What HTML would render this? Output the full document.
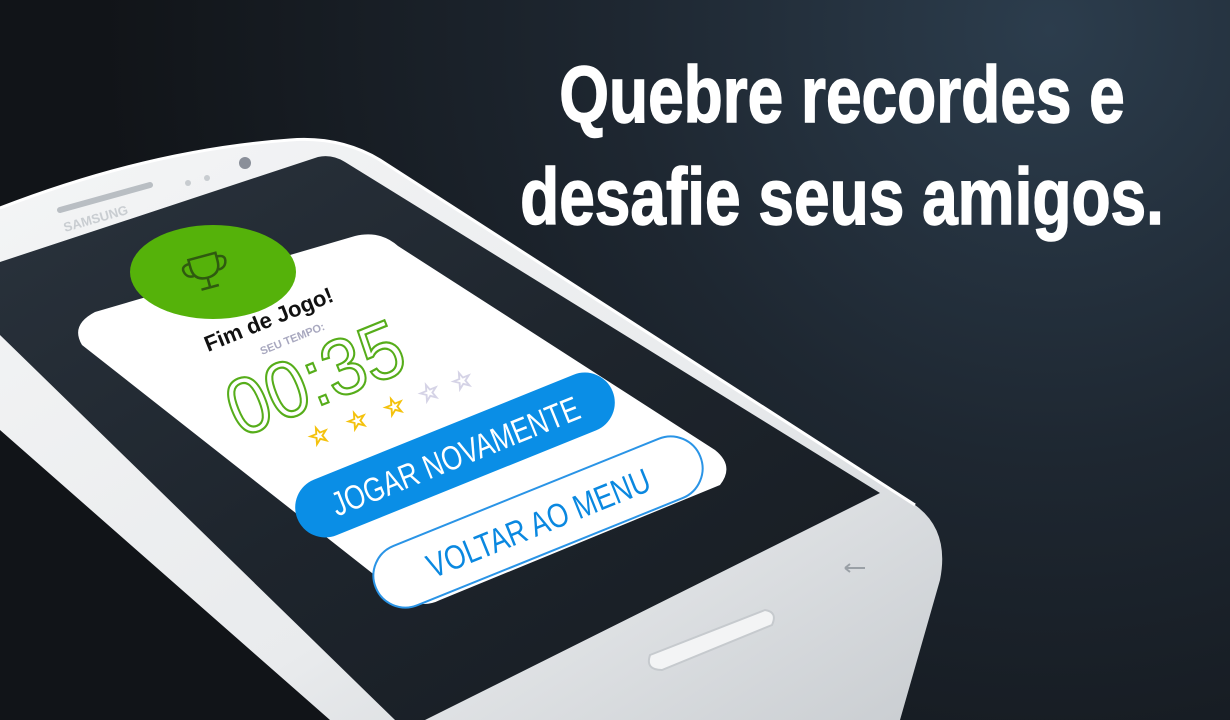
<!DOCTYPE html>
<html><head><meta charset="utf-8"><style>
html,body{margin:0;padding:0;width:1230px;height:720px;overflow:hidden;background:#15191e}
svg{display:block}
</style></head><body>
<svg width="1230" height="720" viewBox="0 0 1230 720" xmlns="http://www.w3.org/2000/svg">
<defs>
<radialGradient id="bg" cx="1050" cy="30" r="950" gradientUnits="userSpaceOnUse">
<stop offset="0" stop-color="#2c3d4d"/><stop offset="0.45" stop-color="#1e2731"/><stop offset="1" stop-color="#111418"/>
</radialGradient>
<linearGradient id="body" x1="0" y1="0" x2="1" y2="1">
<stop offset="0" stop-color="#f4f5f6"/><stop offset="0.6" stop-color="#e9ebed"/><stop offset="1" stop-color="#c9cdd1"/>
</linearGradient>
<linearGradient id="scr" x1="0" y1="0" x2="1" y2="1">
<stop offset="0" stop-color="#2a333d"/><stop offset="0.5" stop-color="#1e252d"/><stop offset="1" stop-color="#161b21"/>
</linearGradient>
</defs>
<rect width="1230" height="720" fill="url(#bg)"/>
<path d="M0 208 Q150 150 290 140 Q340 136 380 160 L915 505 Q950 530 940 580 L900 720 L330 720 L0 430 Z" fill="url(#body)"/>
<path d="M0 208 Q150 150 290 140 Q340 136 380 160 L915 505" fill="none" stroke="#fff" stroke-width="3"/>
<path d="M0 262 L318 157 Q332 154 345 162 L880 493 L425 720 L395 720 L0 335 Z" fill="url(#scr)"/>
<path d="M60 210 L150 185" stroke="#b9bec3" stroke-width="6" stroke-linecap="round"/>
<circle cx="245" cy="163" r="6" fill="#8a8f99"/>
<circle cx="188" cy="183" r="3" fill="#c8ccd0"/><circle cx="207" cy="178" r="3" fill="#c8ccd0"/>
<text x="65" y="232" font-family="Liberation Sans" font-size="13" font-weight="bold" fill="#c9cdd1" transform="rotate(-16 65 232)">SAMSUNG</text>
<path d="M650 655 L765 610 Q778 612 772 625 L662 670 Q645 670 650 655 Z" fill="#f3f4f5" stroke="#c6cace" stroke-width="2"/>
<path d="M845 568 h20 M845 568 l5 -4 M845 568 l5 4" stroke="#9aa0a6" stroke-width="2" fill="none"/>
<path d="M95 312 L355 236 Q380 230 398 246 L715 450 Q735 466 720 485 L440 600 Q420 610 400 595 L82 345 Q70 325 95 312 Z" fill="#fff"/>
<ellipse cx="213" cy="272" rx="83" ry="47" fill="#55b20a"/>
<g transform="translate(205 268) rotate(-15)" fill="none" stroke="#2f5a10" stroke-width="2.5">
<path d="M-14 -12 h28 v8 q0 14 -14 14 q-14 0 -14 -14 Z"/>
<path d="M-14 -8 q-10 0 -7 8 q2 5 8 5 M14 -8 q10 0 7 8 q-2 5 -8 5"/>
<path d="M0 10 v10 M-9 20 h18"/>
</g>
<text x="208" y="352" font-family="Liberation Sans" font-weight="bold" font-size="22" fill="#111" transform="rotate(-22 208 352)">Fim de Jogo!</text>
<text x="262" y="355" font-family="Liberation Sans" font-weight="bold" font-size="11" fill="#a8a8bf" transform="rotate(-22 262 355)">SEU TEMPO:</text>
<g transform="translate(240 438) rotate(-22) scale(0.92 1)">
<text x="0" y="0" font-family="Liberation Sans" font-size="80" fill="none" stroke="#56ad1a" stroke-width="2.2">00:35</text>
</g>
<g font-family="DejaVu Sans" font-size="24">
<text x="312" y="447" fill="none" stroke="#f4c20d" stroke-width="1.2" transform="rotate(-22 312 447)">☆</text>
<text x="350" y="432" fill="none" stroke="#f4c20d" stroke-width="1.2" transform="rotate(-22 350 432)">☆</text>
<text x="387" y="418" fill="none" stroke="#f4c20d" stroke-width="1.2" transform="rotate(-22 387 418)">☆</text>
<text x="422" y="404" fill="none" stroke="#d5d3e6" stroke-width="1.2" transform="rotate(-22 422 404)">☆</text>
<text x="455" y="392" fill="none" stroke="#d5d3e6" stroke-width="1.2" transform="rotate(-22 455 392)">☆</text>
</g>
<g transform="translate(455 455) rotate(-22)">
<rect x="-170" y="-30" width="340" height="60" rx="30" fill="#0a8ee6"/>
<text x="0" y="13" text-anchor="middle" font-family="Liberation Sans" font-size="34" fill="#fff" transform="scale(0.78 1)">JOGAR NOVAMENTE</text>
</g>
<g transform="translate(538 522) rotate(-22)">
<rect x="-175" y="-32" width="350" height="64" rx="32" fill="#fff" stroke="#2a94e6" stroke-width="2"/>
<text x="0" y="13" text-anchor="middle" font-family="Liberation Sans" font-size="34" fill="#0a88e0" transform="scale(0.8 1)">VOLTAR AO MENU</text>
</g>
<g font-family="Liberation Sans" font-weight="bold" font-size="80" fill="#fff" stroke="#fff" stroke-width="1.5" text-anchor="middle">
<g transform="translate(842 122) scale(0.8 1)"><text x="0" y="0">Quebre recordes e</text></g>
<g transform="translate(842 224) scale(0.8 1)"><text x="0" y="0">desafie seus amigos.</text></g>
</g>
</svg>
</body></html>
